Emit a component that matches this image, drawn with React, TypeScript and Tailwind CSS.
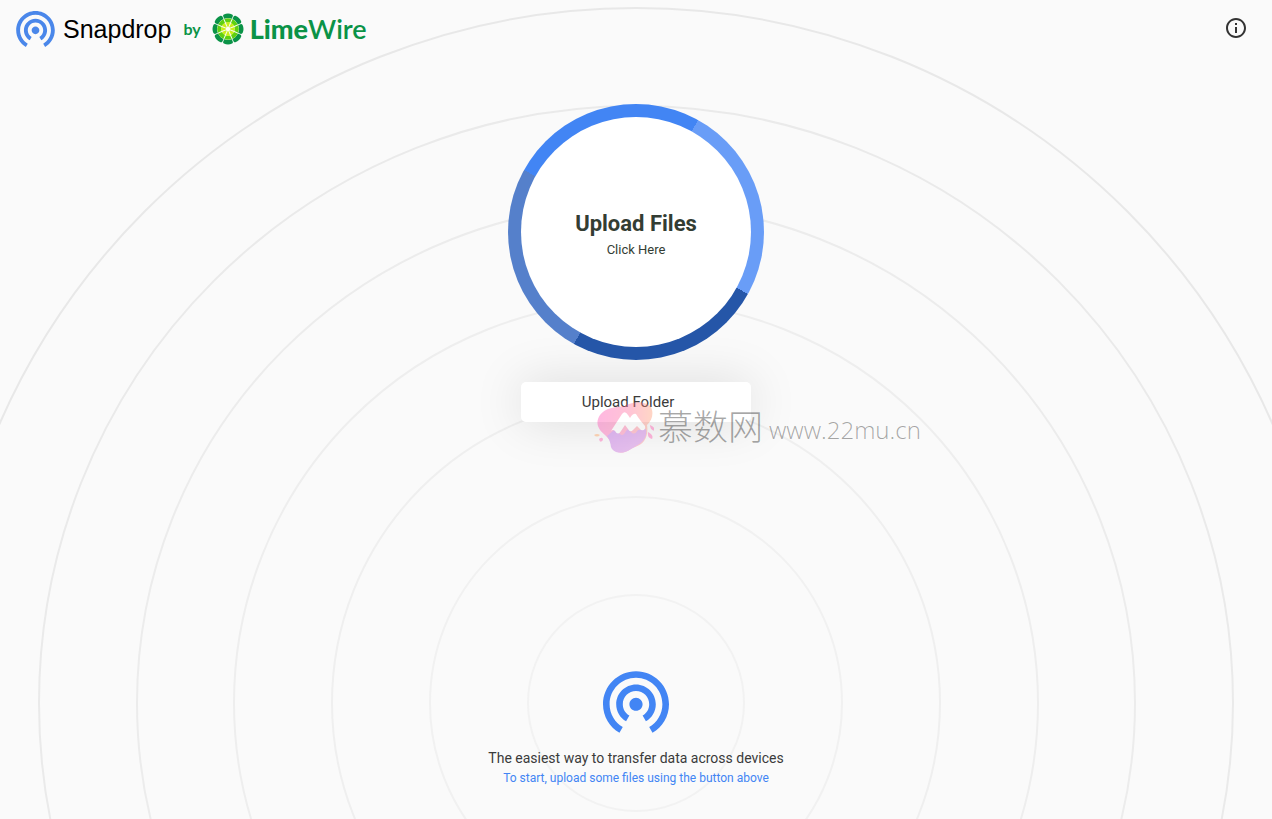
import React from "react";

const ripples = [
  { r: 108, c: "#f2f2f2" },
  { r: 206, c: "#f1f1f1" },
  { r: 304, c: "#efefef" },
  { r: 402, c: "#eeeeee" },
  { r: 499, c: "#ececec" },
  { r: 597, c: "#eaeaea" },
  { r: 695, c: "#e8e8e8" },
];

function Beacon({ className }: { className: string }) {
  return (
    <svg viewBox="2 3 20 18.65" className={className} fill="currentColor" aria-hidden="true">
      <path d="M12 11c-1.1 0-2 .9-2 2s.9 2 2 2 2-.9 2-2-.9-2-2-2zm6 2c0-3.31-2.69-6-6-6s-6 2.69-6 6c0 2.22 1.21 4.15 3 5.19l1-1.74c-1.19-.7-2-1.97-2-3.45 0-2.21 1.79-4 4-4s4 1.79 4 4c0 1.48-.81 2.75-2 3.45l1 1.74c1.79-1.04 3-2.97 3-5.19zM12 3C6.48 3 2 7.48 2 13c0 3.7 2.01 6.92 4.99 8.65l1-1.73C5.61 18.53 4 15.96 4 13c0-4.42 3.58-8 8-8s8 3.58 8 8c0 2.96-1.61 5.53-4 6.92l1 1.73c2.99-1.73 5-4.95 5-8.65 0-5.52-4.48-10-10-10z" />
    </svg>
  );
}

function Lime() {
  const wedges = Array.from({ length: 8 }, (_, i) => i * 45);
  return (
    <svg viewBox="-16 -16 32 32" className="size-8" aria-hidden="true">
      {wedges.map((a) => (
        <g key={a} transform={`rotate(${a})`}>
          <path d="M-3.8-10.2-4.9-13Q-5-14-4.1-14.6 0-16.4 4.1-14.6 5-14 4.9-13L3.8-10.2Q0-11.7-3.8-10.2Z" fill="#0a9347" />
          <path d="M-3.7-10.1Q0-11.6 3.7-10.1L2.1-6.4Q0-7.2-2.1-6.4Z" fill="#5fd010" />
          <path d="M-2.1-6.5Q0-7.3 2.1-6.5L.2-1.6H-.2Z" fill="#c9ee17" />
        </g>
      ))}
      <circle r="2.2" fill="#fffff0" />
    </svg>
  );
}

function Watermark() {
  return (
    <div className="pointer-events-none absolute top-[402px] left-1/2 -ml-[42px] flex items-start text-black/35">
      <svg viewBox="0 0 60 52" className="h-[52px] w-[60px] shrink-0 opacity-40" aria-hidden="true">
        <defs>
          <linearGradient id="splash" x1="0" y1="0" x2="1" y2="0">
            <stop offset="0" stopColor="#ff4fb4" />
            <stop offset=".55" stopColor="#ff6a9c" />
            <stop offset="1" stopColor="#ff9a70" />
          </linearGradient>
          <linearGradient id="drip" x1="0" y1="0" x2="1" y2="1">
            <stop offset="0" stopColor="#b04fe0" />
            <stop offset="1" stopColor="#d070d8" />
          </linearGradient>
        </defs>
        <path d="M6 13C11 6 21 5 31 4 40-1 51-1 57 5c3 7 1 13-4 18 1 6 0 12-3 16-4 5-8 5-13 8-7 5-15 5-18-1-1-5-3-8-8-13C2 26 2 19 6 13Z" fill="url(#splash)" />
        <path d="M13 34 20 28 26 32Q29 35 32 29L34 27 38 31Q41 33 44 28L52 27C54 39 45 42 37 47 28 53 19 51 17 45Q16 38 13 34Z" fill="url(#drip)" />
        <path d="M17 29 28 12Q31 8 34 13L36 16Q39 11 42 12 45 17 51 24 52 29 47 28L43 24 39 28Q36 31 34 27L31 23 27 29Q24 34 21 29Q19 27 17 29Z" fill="white" />
        <path d="M5 37q4-3 4 1-3 4-4-1Zm49-7q6 3 4 7-5-1-4-7Zm2-7q5 2 5 6-5-1-5-6Z" fill="#ff4faa" />
        <path d="M0 33q3-2 6 0-3 3-6 0Z" fill="#ff9a50" />
      </svg>
      <span className="ml-1 font-['Noto_Sans_CJK_SC',sans-serif] text-[35px] leading-[46px] font-light">慕数网</span>
      <span className="ml-1.5 pt-3 font-['Open_Sans',sans-serif] text-2xl font-light">www.22mu.cn</span>
    </div>
  );
}

export default function App() {
  return (
    <div className="relative flex min-h-screen flex-col overflow-hidden bg-[#fafafa] font-[Roboto,sans-serif] text-[#3b3b3b]">
      <svg className="pointer-events-none absolute bottom-[115px] left-1/2 size-px overflow-visible" aria-hidden="true">
        {ripples.map(({ r, c }) => (
          <circle key={r} r={r} fill="none" stroke={c} strokeWidth="2" />
        ))}
      </svg>

      <header className="relative flex h-[58px] items-center justify-between pr-6 pl-4">
        <a href="#" className="flex items-center">
          <Beacon className="h-9 w-[39px] text-[#4a87ea]" />
          <span className="ml-2 font-['Liberation_Sans',sans-serif] text-[25px] leading-8 text-black">Snapdrop</span>
          <span className="ml-3 font-[Lato,sans-serif] text-base font-bold text-[#0a9347]">by</span>
          <span className="ml-[11px] flex items-center font-[Lato,sans-serif] text-[27px] leading-8 text-[#0a9347]">
            <Lime />
            <span className="ml-1.5"><b className="font-black">Lime</b><span className="font-semibold">Wire</span></span>
          </span>
        </a>
        <button type="button" aria-label="About Snapdrop" className="mb-0.5 text-[#333]">
          <svg viewBox="0 0 24 24" className="size-6" fill="currentColor" aria-hidden="true">
            <path d="M11 17h2v-6h-2v6zm1-15C6.48 2 2 6.48 2 12s4.48 10 10 10 10-4.48 10-10S17.52 2 12 2zm0 18c-4.41 0-8-3.59-8-8s3.59-8 8-8 8 3.59 8 8-3.59 8-8 8zM11 9h2V7h-2v2z" />
          </svg>
        </button>
      </header>

      <main className="relative flex flex-1 flex-col items-center pt-[46px]">
        <button type="button" className="relative z-10 flex size-64 rounded-full bg-[conic-gradient(#4285f4_29deg,#699df7_29deg_119deg,#2556a8_119deg_209deg,#5580cb_209deg_299deg,#4285f4_299deg)] p-[13px]">
          <span className="flex flex-1 flex-col items-center justify-center self-stretch rounded-full bg-white pt-2 text-[#333d33]">
            <span className="text-[22px] leading-7 font-bold">Upload Files</span>
            <span className="text-[13px] leading-6">Click Here</span>
          </span>
        </button>
        <button type="button" className="mt-[22px] h-10 w-[230px] rounded-[5px] bg-white pr-4 text-[15px] shadow-[0_0_50px_rgba(0,0,0,0.13)]">
          Upload Folder
        </button>
      </main>

      <footer className="relative flex flex-col items-center pb-[31px] text-center">
        <Beacon className="h-[62px] w-[66px] text-[#4285f4]" />
        <p className="mt-[15px] text-sm leading-5">The easiest way to transfer data across devices</p>
        <p className="text-xs leading-5 text-[#4285f4]">To start, upload some files using the button above</p>
      </footer>

      <Watermark />
    </div>
  );
}
